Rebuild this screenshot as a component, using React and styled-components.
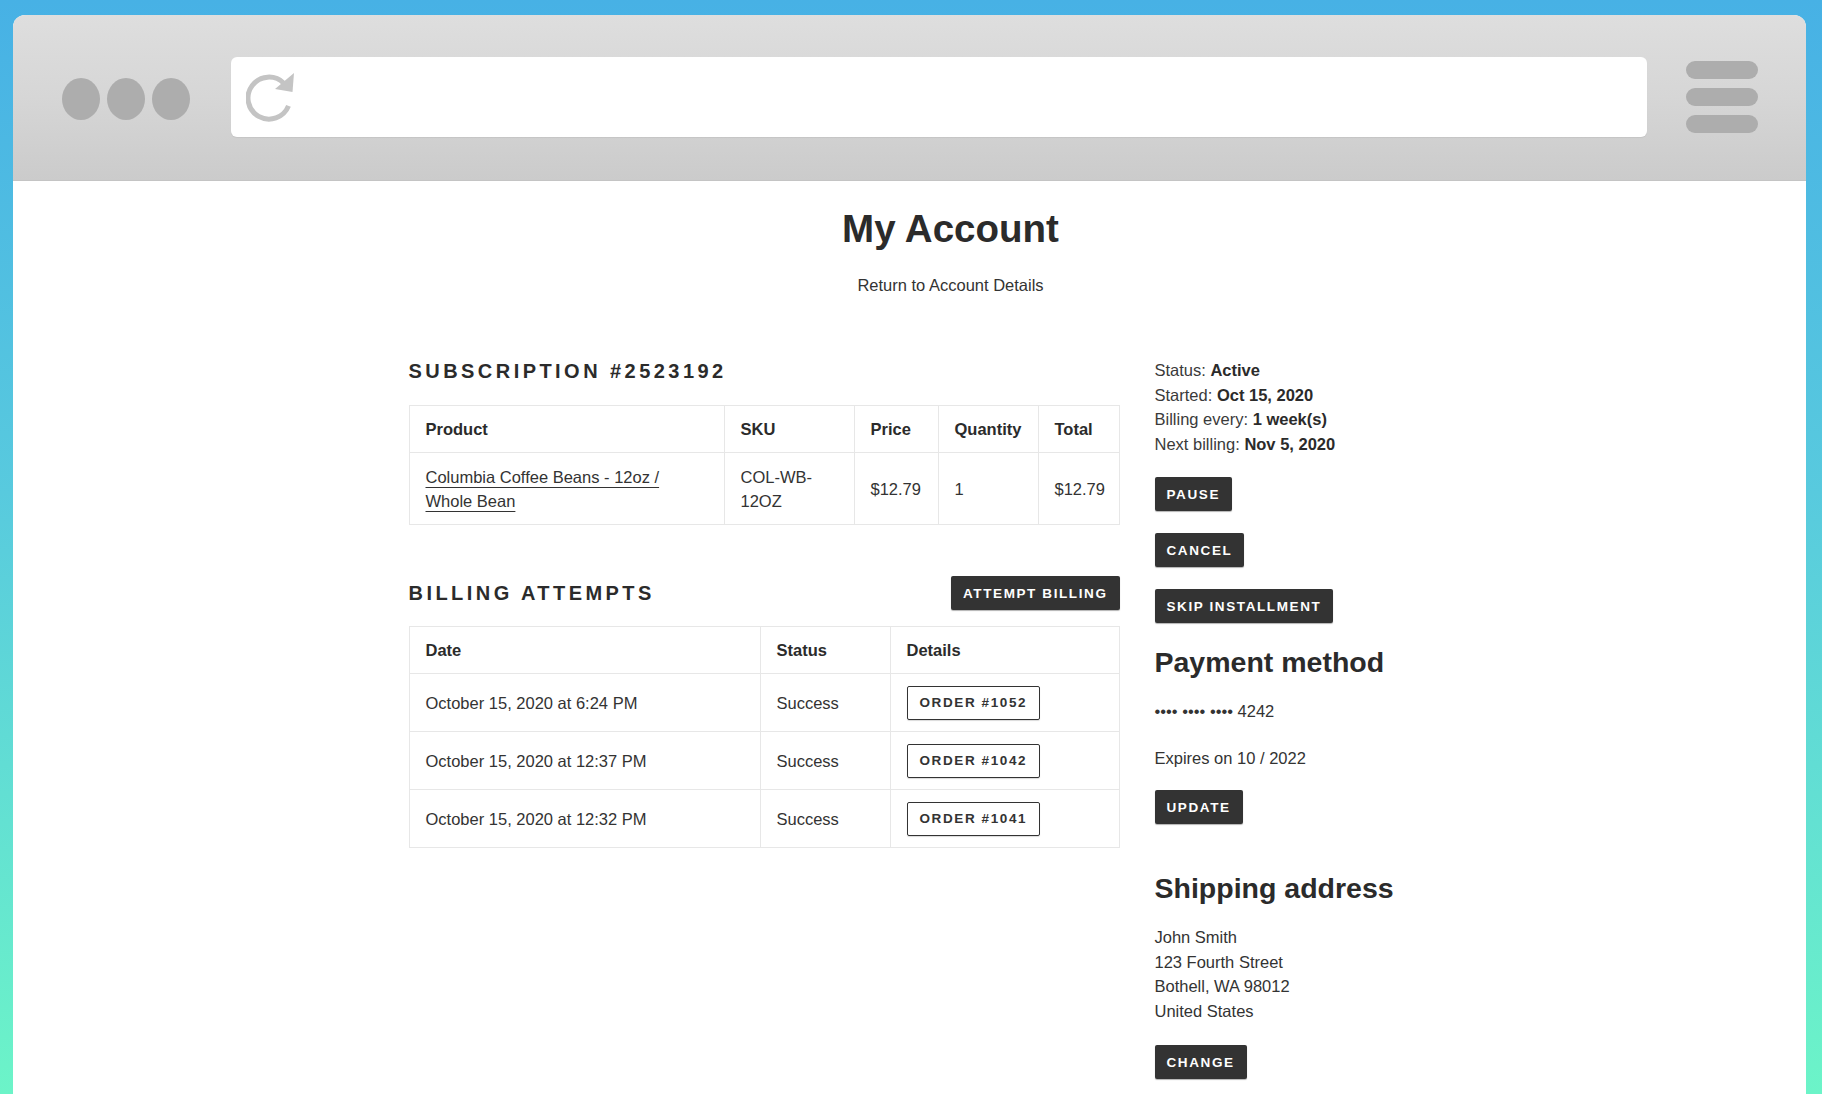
import React from 'react';
import styled, { createGlobalStyle } from 'styled-components';

const GlobalStyle = createGlobalStyle`
  html, body {
    margin: 0;
    padding: 0;
    height: 100%;
  }
  body {
    font-family: "Liberation Sans", Arial, sans-serif;
    color: #333;
    overflow: hidden;
  }
  * { box-sizing: border-box; }
`;

// Backdrop and browser chrome
const Backdrop = styled.div`
  height: 1094px;
  padding: 15px 16px 0 13px;
  background: linear-gradient(180deg, #47b1e5 0%, #58cade 45%, #6cf4c8 100%);
  overflow: hidden;
`;

const BrowserWindow = styled.div`
  height: 1200px;
  border-radius: 12px 12px 0 0;
  overflow: hidden;
  background: #fff;
  display: flex;
  flex-direction: column;
`;

const Toolbar = styled.div`
  height: 166px;
  flex-shrink: 0;
  display: flex;
  align-items: center;
  padding: 0 48px 2px 49px;
  background: linear-gradient(180deg, #dedede 0%, #d6d6d6 50%, #cbcbcb 100%);
  border-bottom: 1px solid #c4c4c4;
`;

const Dots = styled.div`
  display: flex;
  gap: 7px;
  margin: 4px 41px 0 0;
`;

const Dot = styled.span`
  width: 38px;
  height: 42px;
  border-radius: 50%;
  background: #adadad;
`;

const AddressBar = styled.div`
  flex: 1;
  height: 80px;
  background: #fff;
  border-radius: 6px;
  display: flex;
  align-items: center;
  padding-left: 15px;
  box-shadow: 0 1px 1px rgba(0, 0, 0, 0.06);
`;

const Burger = styled.div`
  width: 72px;
  margin-left: 39px;
  display: flex;
  flex-direction: column;
  gap: 9px;
`;

const BurgerBar = styled.span`
  height: 18px;
  border-radius: 9px;
  background: #adadad;
`;

// Page content
const Content = styled.div`
  flex: 1;
  padding: 24px 0 0 82px;
`;

const Container = styled.div`
  width: 1084px;
  margin: 0 auto;
`;

const PageTitle = styled.h1`
  margin: 0;
  text-align: center;
  font-size: 38.5px;
  line-height: 48px;
  font-weight: 700;
  color: #2b2b2b;
`;

const BackLink = styled.a`
  display: block;
  margin-top: 20px;
  text-align: center;
  font-size: 16.5px;
  line-height: 24px;
  color: #333;
  text-decoration: none;
`;

const Columns = styled.div`
  display: grid;
  grid-template-columns: 711px 338px;
  gap: 35px;
  margin-top: 61px;
  align-items: start;
`;

const MainCol = styled.div`
  display: flex;
  flex-direction: column;
`;

const SectionTitle = styled.h2`
  margin: 0;
  font-size: 20px;
  line-height: 26px;
  font-weight: 700;
  letter-spacing: 3.45px;
  color: #2b2b2b;
  text-transform: uppercase;
`;

const SectionHead = styled.div`
  display: flex;
  justify-content: space-between;
  align-items: center;
  margin-top: ${p => p.$mt || 0}px;
`;

const Table = styled.table`
  width: 100%;
  margin-top: ${p => p.$mt || 0}px;
  border-collapse: collapse;
  table-layout: fixed;
  border: 1px solid #e7e7e7;
  font-size: 16.5px;
  line-height: 24px;
`;

const Th = styled.th`
  width: ${p => (p.$w ? `${p.$w}px` : 'auto')};
  padding: 11px 16px;
  text-align: left;
  font-weight: 700;
  color: #2b2b2b;
  border: 1px solid #e7e7e7;
`;

const Td = styled.td`
  padding: 11.5px 16px;
  vertical-align: middle;
  color: #333;
  border: 1px solid #e7e7e7;
`;

const ProductLink = styled.a`
  color: #333;
  text-decoration: underline;
  text-underline-offset: 4px;
  text-decoration-thickness: 1px;
`;

const Button = styled.button`
  height: 34px;
  padding: 0 12px;
  border: ${p => (p.$outline ? '1.5px solid #333' : 'none')};
  border-radius: 2px;
  background: ${p => (p.$outline ? '#fff' : '#333')};
  color: ${p => (p.$outline ? '#333' : '#fff')};
  font-family: "Liberation Sans", Arial, sans-serif;
  font-size: 13.5px;
  font-weight: 700;
  letter-spacing: 1.6px;
  text-transform: uppercase;
  white-space: nowrap;
  box-shadow: ${p => (p.$outline ? '0 1px 1px rgba(0,0,0,0.15)' : '0 1px 1px rgba(0,0,0,0.3)')};
  cursor: pointer;
`;

// Right column
const SideCol = styled.div`
  display: flex;
  flex-direction: column;
  align-items: flex-start;
  font-size: 16.5px;
  line-height: 24.5px;
`;

const InfoLine = styled.div`
  color: #3a3a3a;

  b {
    color: #2b2b2b;
    font-weight: 700;
  }
`;

const ButtonStack = styled.div`
  display: flex;
  flex-direction: column;
  align-items: flex-start;
  gap: 22px;
  margin-top: ${p => p.$mt || 0}px;
`;

const SideTitle = styled.h3`
  margin: ${p => p.$mt || 0}px 0 0;
  font-size: 28.5px;
  line-height: 34px;
  font-weight: 700;
  color: #2b2b2b;
`;

const Para = styled.p`
  margin: ${p => p.$mt || 0}px 0 0;
  color: #333;
`;

const ReloadIcon = () => (
  <svg width="50" height="58" viewBox="0 0 50 58">
    <path
      d="M42.5 37.9 A21 21 0 1 1 37.8 15.2"
      fill="none"
      stroke="#c4c4c4"
      strokeWidth="5"
    />
    <polygon points="48,5 29,21 46.5,24" fill="#c4c4c4" />
  </svg>
);

const attempts = [
  { date: 'October 15, 2020 at 6:24 PM', order: '1052' },
  { date: 'October 15, 2020 at 12:37 PM', order: '1042' },
  { date: 'October 15, 2020 at 12:32 PM', order: '1041' },
];

const App = () => (
  <>
    <GlobalStyle />
    <Backdrop>
      <BrowserWindow>
        <Toolbar>
          <Dots>
            <Dot />
            <Dot />
            <Dot />
          </Dots>
          <AddressBar>
            <ReloadIcon />
          </AddressBar>
          <Burger>
            <BurgerBar />
            <BurgerBar />
            <BurgerBar />
          </Burger>
        </Toolbar>

        <Content>
          <Container>
            <PageTitle>My Account</PageTitle>
            <BackLink href="#">Return to Account Details</BackLink>

            <Columns>
              <MainCol>
                <SectionTitle>Subscription #2523192</SectionTitle>
                <Table $mt={21}>
                  <thead>
                    <tr>
                      <Th $w={315}>Product</Th>
                      <Th $w={130}>SKU</Th>
                      <Th $w={84}>Price</Th>
                      <Th $w={100}>Quantity</Th>
                      <Th>Total</Th>
                    </tr>
                  </thead>
                  <tbody>
                    <tr>
                      <Td>
                        <ProductLink href="#">Columbia Coffee Beans - 12oz / Whole Bean</ProductLink>
                      </Td>
                      <Td>COL-WB-12OZ</Td>
                      <Td>$12.79</Td>
                      <Td>1</Td>
                      <Td>$12.79</Td>
                    </tr>
                  </tbody>
                </Table>

                <SectionHead $mt={51}>
                  <SectionTitle>Billing Attempts</SectionTitle>
                  <Button>Attempt Billing</Button>
                </SectionHead>
                <Table $mt={16}>
                  <thead>
                    <tr>
                      <Th $w={351}>Date</Th>
                      <Th $w={130}>Status</Th>
                      <Th>Details</Th>
                    </tr>
                  </thead>
                  <tbody>
                    {attempts.map(a => (
                      <tr key={a.order}>
                        <Td>{a.date}</Td>
                        <Td>Success</Td>
                        <Td>
                          <Button $outline>Order #{a.order}</Button>
                        </Td>
                      </tr>
                    ))}
                  </tbody>
                </Table>
              </MainCol>

              <SideCol>
                <InfoLine>Status: <b>Active</b></InfoLine>
                <InfoLine>Started: <b>Oct 15, 2020</b></InfoLine>
                <InfoLine>Billing every: <b>1 week(s)</b></InfoLine>
                <InfoLine>Next billing: <b>Nov 5, 2020</b></InfoLine>

                <ButtonStack $mt={21}>
                  <Button>Pause</Button>
                  <Button>Cancel</Button>
                  <Button>Skip Installment</Button>
                </ButtonStack>

                <SideTitle $mt={22}>Payment method</SideTitle>
                <Para $mt={20}>•••• •••• •••• 4242</Para>
                <Para $mt={22}>Expires on 10 / 2022</Para>
                <ButtonStack $mt={20}>
                  <Button>Update</Button>
                </ButtonStack>

                <SideTitle $mt={47}>Shipping address</SideTitle>
                <Para $mt={20}>
                  John Smith<br />
                  123 Fourth Street<br />
                  Bothell, WA 98012<br />
                  United States
                </Para>
                <ButtonStack $mt={22}>
                  <Button>Change</Button>
                </ButtonStack>
              </SideCol>
            </Columns>
          </Container>
        </Content>
      </BrowserWindow>
    </Backdrop>
  </>
);

export default App;
